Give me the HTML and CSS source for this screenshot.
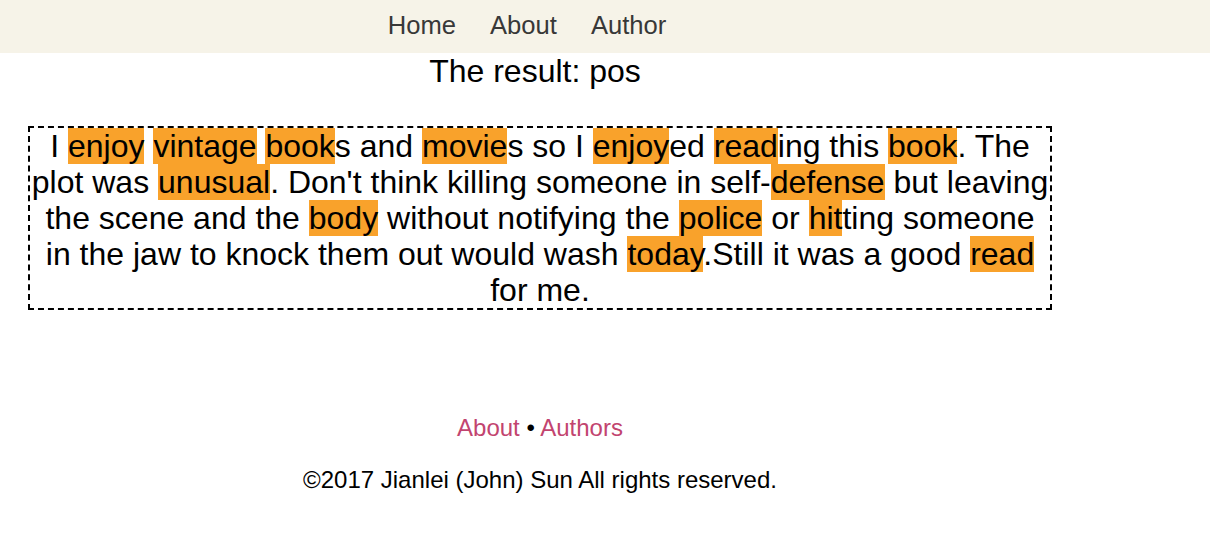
FILE: index.html
```html
<!DOCTYPE html>
<html>
<head>
<meta charset="utf-8">
<title>Result</title>
<link rel="stylesheet" href="styles.css">
</head>
<body>
<header class="topbar">
  <nav class="nav">
    <a class="nav-link" href="#">Home</a>
    <a class="nav-link" href="#">About</a>
    <a class="nav-link" href="#">Author</a>
  </nav>
</header>
<main class="page">
  <h1 class="result">The result: pos</h1>
  <div class="review">I <span class="hl">enjoy</span> <span class="hl">vintage</span> <span class="hl">book</span>s and <span class="hl">movie</span>s so I <span class="hl">enjoy</span>ed <span class="hl">read</span>ing this <span class="hl">book</span>. The plot was <span class="hl">unusual</span>. Don't think killing someone in self-<span class="hl">defense</span> but leaving the scene and the <span class="hl">body</span> without notifying the <span class="hl">police</span> or <span class="hl">hit</span>ting someone in the jaw to knock them out would wash <span class="hl">today</span>.Still it was a good <span class="hl">read</span> for me.</div>
  <footer class="footer">
    <p class="footer-links"><a class="flink" href="#">About</a> • <a class="flink" href="#">Authors</a></p>
    <p class="copy">©2017 Jianlei (John) Sun All rights reserved.</p>
  </footer>
</main>
</body>
</html>
```
FILE: styles.css
```css
html, body {
  margin: 0;
  padding: 0;
  background: #ffffff;
  font-family: "Liberation Sans", Arial, Helvetica, sans-serif;
  color: #000;
}

.topbar {
  background: #f6f3e8;
  height: 53px;
}

.nav {
  width: 1054px;
  height: 53px;
  display: flex;
  justify-content: center;
  align-items: center;
  gap: 34px;
}

.nav-link {
  color: #383838;
  text-decoration: none;
  font-size: 25.6px;
  padding-bottom: 3px;
}

.page {
  width: 1080px;
}

.result {
  margin: 0;
  padding-right: 10px;
  font-size: 32px;
  font-weight: normal;
  text-align: center;
}

.review {
  box-sizing: border-box;
  width: 1024px;
  margin: 36px auto 0;
  border: 2px dashed #000;
  font-size: 32px;
  line-height: 36px;
  text-align: center;
}

.hl {
  background: #f9a22b;
}

.footer {
  text-align: center;
  font-size: 24px;
  padding-top: 104px;
}

.footer-links {
  margin: 0;
}

.flink {
  color: #c2446f;
  text-decoration: none;
}

.copy {
  margin: 24px 0 0;
}
```
